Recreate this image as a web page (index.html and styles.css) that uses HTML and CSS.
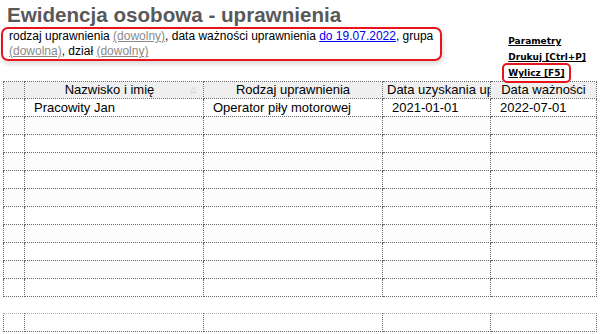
FILE: index.html
```html
<!DOCTYPE html>
<html lang="pl">
<head>
    <meta charset="UTF-8">
    <title>Ewidencja osobowa - uprawnienia</title>
    <link rel="stylesheet" href="styles.css">
</head>
<body>
  <div class="page">
    <div class="top">
      <div class="left">
        <h1 class="title">Ewidencja osobowa - uprawnienia</h1>
        <div class="filter">
          rodzaj uprawnienia <a href="#" class="opt">(dowolny)</a>, data ważności uprawnienia <a href="#" class="date">do 19.07.2022</a>, grupa<br>
          <a href="#" class="opt">(dowolna)</a>, dział <a href="#" class="opt">(dowolny)</a>
        </div>
      </div>
      <div class="actions">
        <a href="#">Parametry</a>
        <a href="#">Drukuj [Ctrl+P]</a>
        <a href="#" class="hl">Wylicz [F5]</a>
      </div>
    </div>

    <table class="grid">
      <colgroup>
        <col class="c0"><col class="c1"><col class="c2"><col class="c3"><col class="c4">
      </colgroup>
      <thead>
        <tr>
          <th></th>
          <th><span class="arrow">&#9651;</span>Nazwisko i imię</th>
          <th>Rodzaj uprawnienia</th>
          <th>Data uzyskania uprawnienia</th>
          <th>Data ważności</th>
        </tr>
      </thead>
      <tbody>
        <tr><td></td><td>Pracowity Jan</td><td>Operator piły motorowej</td><td>2021-01-01</td><td>2022-07-01</td></tr>
        <tr><td></td><td></td><td></td><td></td><td></td></tr>
        <tr><td></td><td></td><td></td><td></td><td></td></tr>
        <tr><td></td><td></td><td></td><td></td><td></td></tr>
        <tr><td></td><td></td><td></td><td></td><td></td></tr>
        <tr><td></td><td></td><td></td><td></td><td></td></tr>
        <tr><td></td><td></td><td></td><td></td><td></td></tr>
        <tr><td></td><td></td><td></td><td></td><td></td></tr>
        <tr><td></td><td></td><td></td><td></td><td></td></tr>
        <tr><td></td><td></td><td></td><td></td><td></td></tr>
        <tr><td></td><td></td><td></td><td></td><td></td></tr>
      </tbody>
    </table>

    <table class="grid foot">
      <colgroup>
        <col class="c0"><col class="c1"><col class="c2"><col class="c3"><col class="c4">
      </colgroup>
      <tr><td></td><td></td><td></td><td></td><td></td></tr>
    </table>
  </div>
</body>
</html>
```

FILE: styles.css
```css
body {
  margin: 0;
  padding: 0;
  background-color: #fff;
  font-family: "Liberation Sans", Arial, sans-serif;
  color: #000;
}
.page {
  padding: 4px 5px 0 3px;
}
.top {
  display: flex;
  justify-content: space-between;
  height: 77px;
}
.left {
  margin-left: -2px;
}
.title {
  margin: 0 0 0 6px;
  font-size: 20.6px;
  line-height: 22px;
  font-weight: bold;
  color: #595959;
}
.filter {
  margin-top: 1px;
  width: 425px;
  padding: 0 6px 0 6px;
  font-size: 12px;
  line-height: 15px;
  border: 2px solid #e8141c;
  border-radius: 7px;
  box-shadow: 1px 3px 5px rgba(0, 0, 0, 0.15);
}
.filter a.opt {
  color: #8a8a8a;
}
.filter a.date {
  color: #0000ee;
}
.actions {
  display: flex;
  flex-direction: column;
  align-items: flex-start;
  gap: 4px;
  margin-top: 31px;
  margin-right: 9px;
  font-family: "DejaVu Sans", Verdana, sans-serif;
  font-size: 9px;
  font-weight: bold;
}
.actions a {
  color: #000;
  line-height: 12px;
  padding: 0 1px;
}
.actions a.hl {
  margin-left: -5px;
  padding: 2px 4px 2px 4px;
  border: 2px solid #e8141c;
  border-radius: 5px;
  margin-top: -4px;
}

.grid {
  border-collapse: collapse;
  table-layout: fixed;
  width: 593px;
  font-size: 13px;
}
.c0 { width: 21px; }
.c1 { width: 179px; }
.c2 { width: 179px; }
.c3 { width: 108px; }
.c4 { width: 106px; }
.grid th, .grid td {
  border: 1px dotted #666;
  height: 17px;
  padding: 0 4px;
  white-space: nowrap;
  overflow: hidden;
  line-height: 16px;
}
.grid th {
  background-color: #efefef;
  font-weight: normal;
  text-align: center;
  height: 16px;
}
.grid td {
  padding-left: 9px;
}
.grid tbody tr:nth-child(even) td {
  background-color: #fcfcfc;
}
.arrow {
  float: right;
  margin-right: 3px;
  font-size: 8px;
  color: #c8c8c8;
}
.foot {
  margin-top: 16px;
}
.foot td {
  border-top-color: #aaa;
}
```
